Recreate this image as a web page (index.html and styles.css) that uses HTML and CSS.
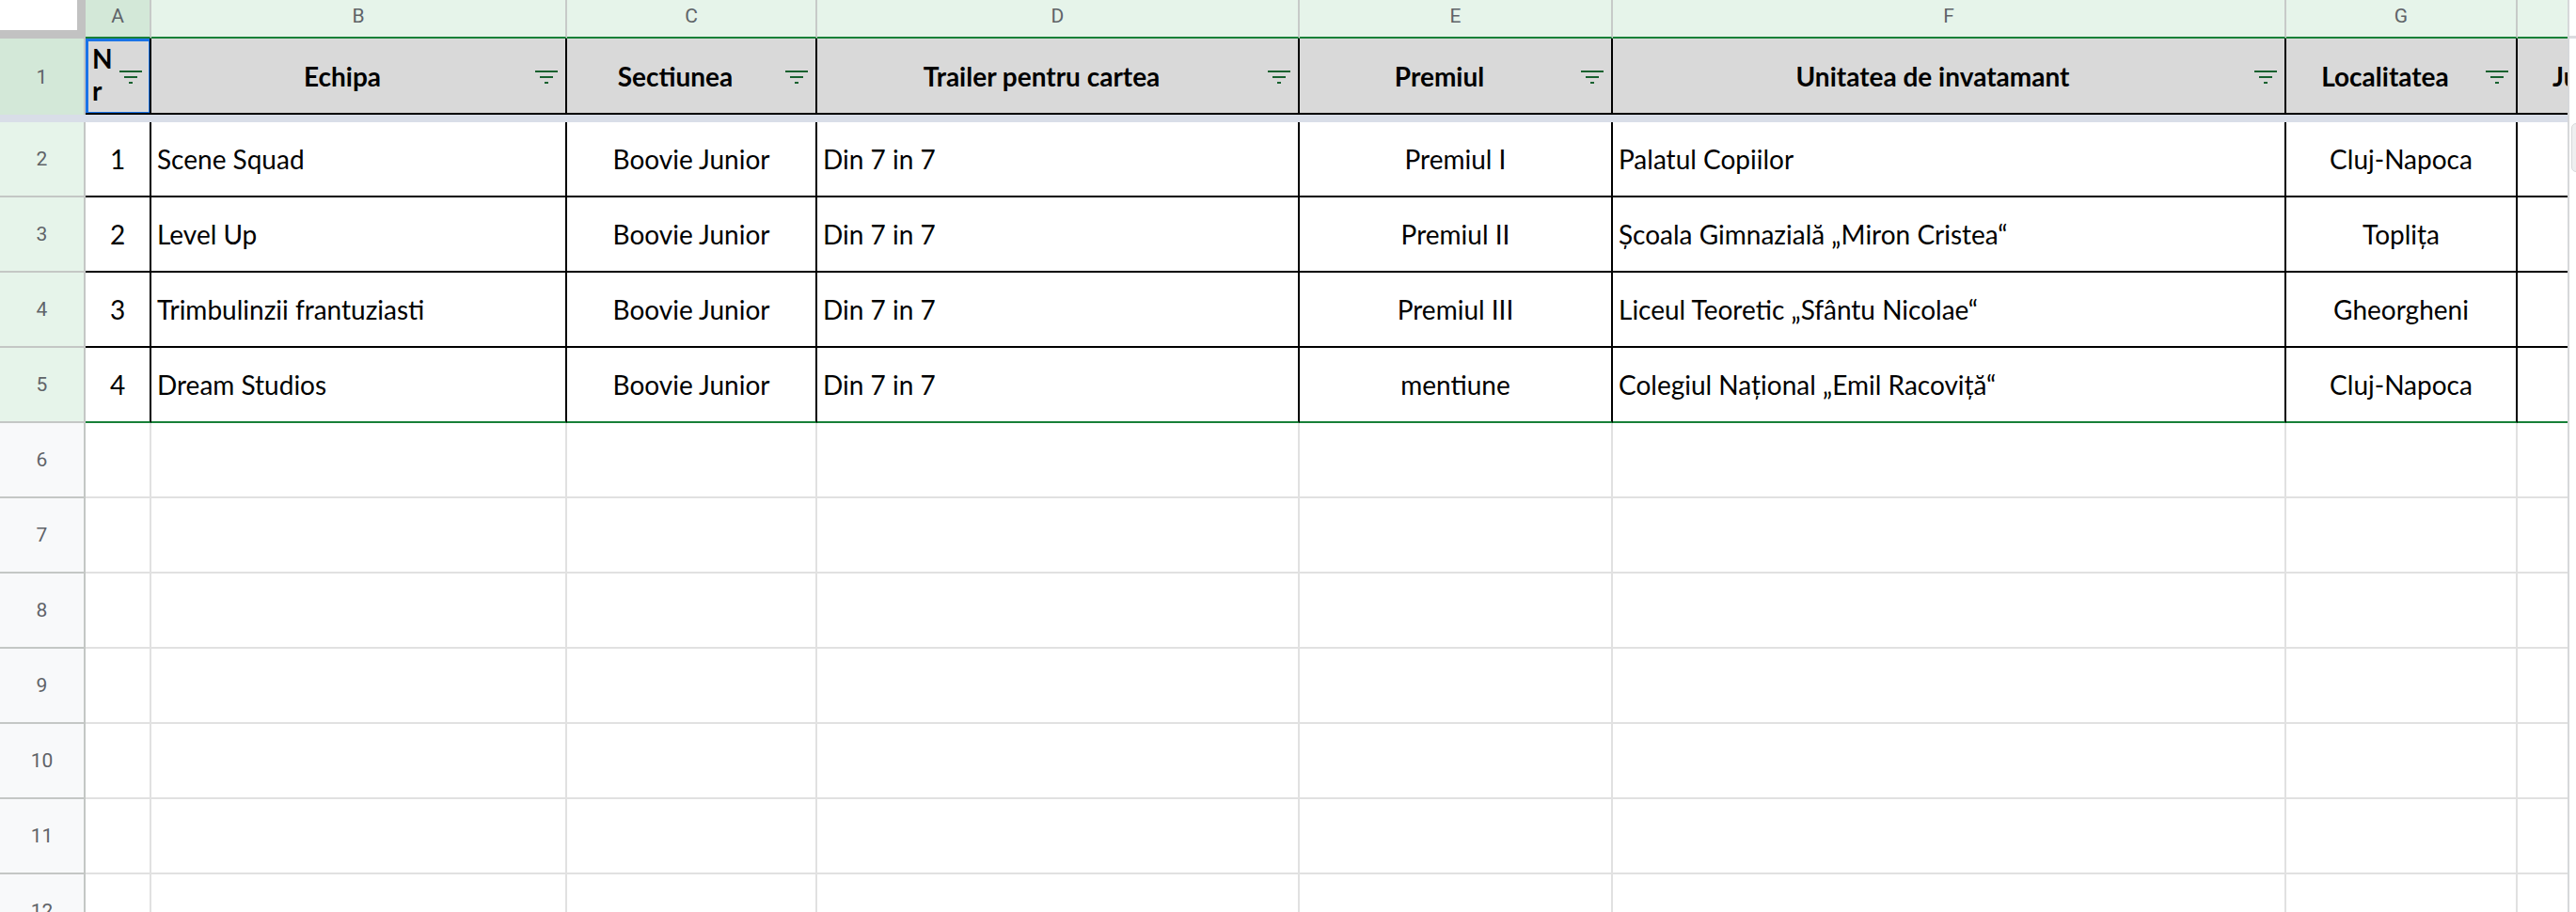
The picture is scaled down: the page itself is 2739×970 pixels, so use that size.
FILE: index.html
```html
<!DOCTYPE html>
<html lang="ro">
<head>
<meta charset="utf-8">
<title>Sheet</title>
<link rel="stylesheet" href="styles.css">
</head>
<body>
<div class="app">
  <div class="sheet">
    <div class="row colhead">
      <div class="corner"><div class="corner-box"></div></div>
      <div class="ch ch-sel">A</div>
      <div class="ch">B</div>
      <div class="ch">C</div>
      <div class="ch">D</div>
      <div class="ch">E</div>
      <div class="ch">F</div>
      <div class="ch">G</div>
      <div class="ch ch-last"></div>
    </div>

    <div class="row hrow">
      <div class="rh rh-sel">1</div>
      <div class="hc hc-a1"><span class="nr">Nr</span><svg class="filt" viewBox="0 0 24 14"><rect x="0" y="0" width="24" height="2"/><rect x="5" y="6" width="14" height="2"/><rect x="10" y="12" width="4" height="2"/></svg></div>
      <div class="hc"><span class="ht">Echipa</span><svg class="filt" viewBox="0 0 24 14"><rect x="0" y="0" width="24" height="2"/><rect x="5" y="6" width="14" height="2"/><rect x="10" y="12" width="4" height="2"/></svg></div>
      <div class="hc"><span class="ht">Sectiunea</span><svg class="filt" viewBox="0 0 24 14"><rect x="0" y="0" width="24" height="2"/><rect x="5" y="6" width="14" height="2"/><rect x="10" y="12" width="4" height="2"/></svg></div>
      <div class="hc"><span class="ht">Trailer pentru cartea</span><svg class="filt" viewBox="0 0 24 14"><rect x="0" y="0" width="24" height="2"/><rect x="5" y="6" width="14" height="2"/><rect x="10" y="12" width="4" height="2"/></svg></div>
      <div class="hc"><span class="ht">Premiul</span><svg class="filt" viewBox="0 0 24 14"><rect x="0" y="0" width="24" height="2"/><rect x="5" y="6" width="14" height="2"/><rect x="10" y="12" width="4" height="2"/></svg></div>
      <div class="hc"><span class="ht">Unitatea de invatamant</span><svg class="filt" viewBox="0 0 24 14"><rect x="0" y="0" width="24" height="2"/><rect x="5" y="6" width="14" height="2"/><rect x="10" y="12" width="4" height="2"/></svg></div>
      <div class="hc"><span class="ht">Localitatea</span><svg class="filt" viewBox="0 0 24 14"><rect x="0" y="0" width="24" height="2"/><rect x="5" y="6" width="14" height="2"/><rect x="10" y="12" width="4" height="2"/></svg></div>
      <div class="hc hc-last"><span class="ht-clip">Judetul</span></div>
    </div>

    <div class="freeze"></div>

    <div class="row drow">
      <div class="rh rh-data">2</div>
      <div class="dc c">1</div>
      <div class="dc l">Scene Squad</div>
      <div class="dc c">Boovie Junior</div>
      <div class="dc l">Din 7 in 7</div>
      <div class="dc c">Premiul I</div>
      <div class="dc l">Palatul Copiilor</div>
      <div class="dc c">Cluj-Napoca</div>
      <div class="dc last"></div>
    </div>
    <div class="row drow">
      <div class="rh rh-data">3</div>
      <div class="dc c">2</div>
      <div class="dc l">Level Up</div>
      <div class="dc c">Boovie Junior</div>
      <div class="dc l">Din 7 in 7</div>
      <div class="dc c">Premiul II</div>
      <div class="dc l">Școala Gimnazială „Miron Cristea“</div>
      <div class="dc c">Toplița</div>
      <div class="dc last"></div>
    </div>
    <div class="row drow">
      <div class="rh rh-data">4</div>
      <div class="dc c">3</div>
      <div class="dc l">Trimbulinzii frantuziasti</div>
      <div class="dc c">Boovie Junior</div>
      <div class="dc l">Din 7 in 7</div>
      <div class="dc c">Premiul III</div>
      <div class="dc l">Liceul Teoretic „Sfântu Nicolae“</div>
      <div class="dc c">Gheorgheni</div>
      <div class="dc last"></div>
    </div>
    <div class="row drow drow-end">
      <div class="rh rh-data">5</div>
      <div class="dc c">4</div>
      <div class="dc l">Dream Studios</div>
      <div class="dc c">Boovie Junior</div>
      <div class="dc l">Din 7 in 7</div>
      <div class="dc c">mentiune</div>
      <div class="dc l">Colegiul Național „Emil Racoviță“</div>
      <div class="dc c">Cluj-Napoca</div>
      <div class="dc last"></div>
    </div>

    <div class="row erow"><div class="rh">6</div><div class="ec"></div><div class="ec"></div><div class="ec"></div><div class="ec"></div><div class="ec"></div><div class="ec"></div><div class="ec"></div><div class="ec last"></div></div>
    <div class="row erow"><div class="rh">7</div><div class="ec"></div><div class="ec"></div><div class="ec"></div><div class="ec"></div><div class="ec"></div><div class="ec"></div><div class="ec"></div><div class="ec last"></div></div>
    <div class="row erow"><div class="rh">8</div><div class="ec"></div><div class="ec"></div><div class="ec"></div><div class="ec"></div><div class="ec"></div><div class="ec"></div><div class="ec"></div><div class="ec last"></div></div>
    <div class="row erow"><div class="rh">9</div><div class="ec"></div><div class="ec"></div><div class="ec"></div><div class="ec"></div><div class="ec"></div><div class="ec"></div><div class="ec"></div><div class="ec last"></div></div>
    <div class="row erow"><div class="rh">10</div><div class="ec"></div><div class="ec"></div><div class="ec"></div><div class="ec"></div><div class="ec"></div><div class="ec"></div><div class="ec"></div><div class="ec last"></div></div>
    <div class="row erow"><div class="rh">11</div><div class="ec"></div><div class="ec"></div><div class="ec"></div><div class="ec"></div><div class="ec"></div><div class="ec"></div><div class="ec"></div><div class="ec last"></div></div>
    <div class="row erow"><div class="rh">12</div><div class="ec"></div><div class="ec"></div><div class="ec"></div><div class="ec"></div><div class="ec"></div><div class="ec"></div><div class="ec"></div><div class="ec last"></div></div>
  </div>
  <div class="vscroll">
    <div class="vscroll-top"></div>
    <div class="thumb"></div>
  </div>
</div>
</body>
</html>
```

FILE: styles.css
```css
* { box-sizing: border-box; }

html, body {
  margin: 0;
  padding: 0;
  background: #ffffff;
  overflow: hidden;
}

.app {
  display: flex;
  width: 2739px;
  height: 970px;
  overflow: hidden;
}

.sheet {
  width: 2730px;
  flex: 0 0 2730px;
  display: flex;
  flex-direction: column;
}

.row {
  display: grid;
  grid-template-columns: 91px 70px 442px 266px 513px 333px 716px 246px 53px;
  flex: 0 0 auto;
}

/* column header strip */
.colhead { height: 41px; }

.corner {
  background: #c2c2c2;
  padding: 0 9px 9px 0;
}
.corner-box {
  background: #ffffff;
  width: 100%;
  height: 100%;
}

.ch {
  background: #e6f4ea;
  border-right: 2px solid #c7cac8;
  border-bottom: 2px solid #188038;
  display: flex;
  align-items: center;
  justify-content: center;
  padding-bottom: 6px;
  font-family: Roboto, "Noto Sans", sans-serif;
  font-size: 21px;
  color: #5f6368;
}
.ch-sel { background: #d3e8d8; }
.ch-last { border-right: none; }

/* row headers */
.rh {
  background: #f8f9fa;
  border-right: 2px solid #c4c7c5;
  border-bottom: 2px solid #c4c7c5;
  display: flex;
  align-items: center;
  justify-content: center;
  font-family: Roboto, "Noto Sans", sans-serif;
  font-size: 21px;
  color: #5f6368;
}
.rh-sel { background: #d3e8d8; border-bottom: none; }
.rh-data { background: #e6f4ea; }

/* header row */
.hrow { height: 81px; }

.hc {
  position: relative;
  background: #d9d9d9;
  border-right: 2px solid #000000;
  border-bottom: 2px solid #000000;
  display: flex;
  align-items: center;
  justify-content: center;
  padding: 0 40px 0 6px;
  font-family: Lato, "Noto Sans", sans-serif;
  font-weight: 700;
  font-size: 28px;
  color: #000000;
  overflow: hidden;
}
.hc-a1 {
  justify-content: flex-start;
  padding-left: 7px;
}
.hc-a1::after {
  content: "";
  position: absolute;
  left: 0;
  top: 0;
  right: -2px;
  bottom: -2px;
  border: 3px solid #1a73e8;
}
.nr {
  width: 24px;
  word-break: break-all;
  line-height: 34px;
  margin-top: -3px;
}
.ht { white-space: nowrap; }
.hc-last {
  border-right: none;
  justify-content: flex-start;
  padding: 0 0 0 37px;
}
.ht-clip { white-space: nowrap; }

.filt {
  position: absolute;
  right: 8px;
  top: 34px;
  width: 24px;
  height: 14px;
  fill: #17612f;
}

/* frozen separator */
.freeze {
  height: 8px;
  flex: 0 0 8px;
  background: #d9dee8;
}

/* data rows */
.drow { height: 80px; }

.dc {
  background: #ffffff;
  border-right: 2px solid #000000;
  border-bottom: 2px solid #000000;
  display: flex;
  align-items: center;
  padding: 0 6px;
  font-family: Lato, "Noto Sans", sans-serif;
  font-size: 28px;
  color: #000000;
  white-space: nowrap;
  overflow: hidden;
}
.dc.c { justify-content: center; }
.dc.l { justify-content: flex-start; }
.dc.last { border-right: none; }
.drow-end .dc { border-bottom-color: #188038; }

/* empty rows */
.erow { height: 80px; }
.ec {
  background: #ffffff;
  border-right: 2px solid #e1e1e1;
  border-bottom: 2px solid #e1e1e1;
}
.ec.last { border-right: none; }

/* vertical scrollbar strip */
.vscroll {
  position: relative;
  flex: 0 0 9px;
  width: 9px;
  background: #ffffff;
  border-left: 2px solid #d6d8da;
}
.vscroll-top {
  height: 41px;
  border-bottom: 3px solid #dadce0;
  background: #ffffff;
}
.thumb {
  position: absolute;
  left: 2px;
  top: 131px;
  width: 10px;
  height: 52px;
  border-radius: 6px;
  background: #eeeff0;
  border: 1px solid #d7d9db;
}
```
